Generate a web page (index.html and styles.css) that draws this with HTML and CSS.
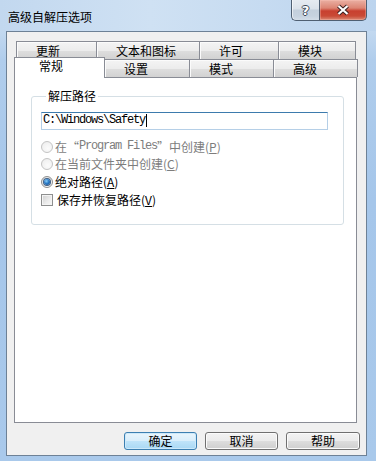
FILE: index.html
```html
<!DOCTYPE html>
<html lang="zh-CN">
<head>
<meta charset="utf-8">
<title>高级自解压选项</title>
<link rel="stylesheet" href="styles.css">
</head>
<body>
<div class="window">
  <div class="titlebar">
    <div class="title">高级自解压选项</div>
    <div class="caption">
      <div class="cbtn help"><span class="qmark">?</span></div>
      <div class="cbtn close">
        <svg width="16" height="12" viewBox="0 0 16 12">
          <path d="M3.5 2 L12.5 10 M12.5 2 L3.5 10" stroke="#3a2020" stroke-width="4.2" fill="none"/>
          <path d="M3.5 2 L12.5 10 M12.5 2 L3.5 10" stroke="#ffffff" stroke-width="2.2" fill="none"/>
        </svg>
      </div>
    </div>
  </div>
  <div class="client">
    <div class="tabs">
      <div class="tabrow back">
        <div class="tab t-upd">更新</div>
        <div class="tab t-txt">文本和图标</div>
        <div class="tab t-lic">许可</div>
        <div class="tab t-mod">模块</div>
      </div>
      <div class="tabrow front">
        <div class="tab sel t-gen">常规</div>
        <div class="tab t-set">设置</div>
        <div class="tab t-mode">模式</div>
        <div class="tab t-adv">高级</div>
      </div>
    </div>
    <div class="panel">
      <fieldset class="group">
        <legend>解压路径</legend>
        <div class="textbox"><span class="mono">C:\Windows\Safety</span><span class="caret"></span></div>
        <div class="opt disabled first"><span class="radio"></span><span>在</span><span class="q ql">“</span><span class="mono">Program Files</span><span class="q qr">”</span><span>中创建(<u>P</u>)</span></div>
        <div class="opt disabled"><span class="radio"></span><span>在当前文件夹中创建(<u>C</u>)</span></div>
        <div class="opt third"><span class="radio on"></span><span>绝对路径(<u>A</u>)</span></div>
        <div class="opt fourth"><span class="check"></span><span>保存并恢复路径(<u>V</u>)</span></div>
      </fieldset>
    </div>
    <div class="buttons">
      <div class="btn default">确定</div>
      <div class="btn">取消</div>
      <div class="btn wide">帮助</div>
    </div>
  </div>
</div>
</body>
</html>
```
FILE: styles.css
```css
* { box-sizing: border-box; }
html, body { margin: 0; padding: 0; }
body {
  width: 376px;
  height: 461px;
  overflow: hidden;
  font-family: "Noto Sans CJK SC", "Noto Sans", sans-serif;
  font-size: 12px;
  color: #000;
  background: #a9c9ea;
}
.window {
  width: 376px;
  height: 461px;
  display: flex;
  flex-direction: column;
  background: linear-gradient(180deg, #c8dcf1 0px, #c3d9f0 30px, #b0cdec 60px, #a5c6ea 200px, #a9c9eb 100%);
}
.titlebar {
  height: 31px;
  display: flex;
  align-items: flex-start;
  background: linear-gradient(90deg, #c2d8ef 0%, #cfe1f3 40%, #c6dbf1 70%, #bcd4ee 100%);
}
.title {
  padding-left: 8px;
  padding-top: 9px;
  line-height: 16px;
  font-size: 12px;
  color: #000;
}
.caption {
  margin-left: auto;
  margin-right: 9px;
  display: flex;
  height: 21px;
}
.cbtn {
  height: 21px;
  display: flex;
  align-items: center;
  justify-content: center;
  border: 1px solid #4f5f72;
  border-top: none;
}
.help {
  width: 28px;
  border-right: none;
  border-bottom-left-radius: 5px;
  background: linear-gradient(180deg, #e6ebf1 0%, #dbe2ea 45%, #c3cfdc 50%, #c6d2df 80%, #d3dde8 100%);
  box-shadow: inset 1px 0 0 rgba(255,255,255,0.6);
}
.qmark {
  font-family: "DejaVu Sans", sans-serif;
  font-weight: bold;
  font-size: 13px;
  line-height: 13px;
  color: #fff;
  text-shadow: 1px 0 0 #3c4656, -1px 0 0 #3c4656, 0 1px 0 #3c4656, 0 -1px 0 #3c4656;
}
.close {
  width: 48px;
  border-bottom-right-radius: 5px;
  background: linear-gradient(180deg, #eab0a3 0%, #dc8574 40%, #c8402f 55%, #c94a36 80%, #da8a75 100%);
  box-shadow: inset 0 0 0 1px rgba(255,200,190,0.35);
}
.client {
  margin-left: 6px;
  width: 361px;
  height: 425px;
  border: 1px solid #6d8196;
  background: #f0f0f0;
  display: flex;
  flex-direction: column;
  padding: 9px 6px 0 7px;
}
.tabs {
  height: 36px;
  display: flex;
  flex-direction: column;
}
.tabrow {
  height: 18px;
  display: flex;
  align-items: flex-end;
}
.tabrow.back { margin-left: 2px; }
.tab {
  height: 18px;
  border: 1px solid #898c95;
  border-bottom: none;
  padding-left: 19px;
  padding-top: 3px;
  line-height: 12px;
  white-space: nowrap;
  background: linear-gradient(180deg, #f4f4f4 0%, #ececec 50%, #dedede 52%, #d2d2d2 100%);
  box-shadow: inset 1px 1px 0 #fbfbfb;
  margin-left: -1px;
}
.tab:first-child { margin-left: 0; }
.t-upd { width: 81px; }
.t-txt { width: 104px; }
.t-lic { width: 80px; }
.t-mod { width: 78px; }
.t-gen { width: 91px; }
.t-set { width: 86px; }
.t-mode { width: 85px; }
.t-adv { width: 85px; }
.tab.sel {
  height: 21px;
  margin-bottom: -1px;
  position: relative;
  z-index: 1;
  background: #fff;
  box-shadow: none;
  padding-left: 24px;
  padding-top: 2px;
}
.panel {
  width: 343px;
  height: 346px;
  border: 1px solid #898c95;
  background: #fff;
  padding: 0;
}
.group {
  margin: 11px 0 0 16px;
  width: 313px;
  border: 1px solid #d5dfe5;
  border-radius: 3px;
  padding: 9px 0 16px 9px;
  min-inline-size: 0;
}
.group legend {
  margin-left: 5px;
  padding: 0 2px;
  line-height: 14px;
  font-size: 12px;
}
.textbox {
  width: 287px;
  height: 18px;
  border: 1px solid #b5cfe7;
  border-top-color: #3d7bad;
  padding-left: 1px;
  display: flex;
  align-items: center;
}
.mono {
  font-family: "Liberation Mono", monospace;
  font-size: 12px;
  letter-spacing: -1.2px;
}
.textbox .mono { line-height: 14px; margin-top: -2px; }
.caret {
  width: 1px;
  height: 13px;
  background: #000;
  margin-left: 1px;
  margin-top: -1px;
}
.opt {
  height: 17px;
  display: flex;
  align-items: center;
  line-height: 17px;
  white-space: nowrap;
}
.opt.first { margin-top: 8px; }
.opt.third { margin-top: 1px; }
.opt.fourth { margin-top: 1px; }
.opt.disabled { color: #7d7d7d; }
.q { display: inline-block; width: 12px; }
.ql { text-align: right; padding-right: 1px; }
.qr { text-align: left; }
.radio {
  width: 12px;
  height: 12px;
  border-radius: 50%;
  border: 1px solid #8e8f8f;
  background: radial-gradient(circle at 60% 65%, #ffffff 0%, #f1f1f1 50%, #d6d6d6 100%);
  margin-right: 2px;
  flex: none;
  display: flex;
  align-items: center;
  justify-content: center;
}
.disabled .radio {
  border-color: #c4c4c4;
  background: radial-gradient(circle at 60% 65%, #fbfbfb 0%, #f2f2f2 60%, #e6e6e6 100%);
}
.radio.on::after {
  content: "";
  width: 6px;
  height: 6px;
  border-radius: 50%;
  background: radial-gradient(circle at 40% 35%, #8cd0f8 0%, #2a7bc8 45%, #0d3f7c 100%);
  box-shadow: 0 0 0 1px #3f5f85;
}
.check {
  width: 12px;
  height: 12px;
  border: 1px solid #8e8f8f;
  background: linear-gradient(135deg, #cfcfcf 0%, #ececec 60%, #f8f8f8 100%);
  box-shadow: inset 0 0 0 1px #f4f4f4;
  margin-right: 4px;
  flex: none;
}
.buttons {
  margin-top: 9px;
  display: flex;
  justify-content: flex-end;
  gap: 8px;
}
.btn {
  width: 73px;
  height: 18px;
  border: 1px solid #707070;
  border-radius: 3px;
  background: linear-gradient(180deg, #f3f3f3 0%, #ebebeb 50%, #dddddd 52%, #cfcfcf 100%);
  box-shadow: inset 0 0 0 1px #fbfbfb;
  text-align: center;
  line-height: 16px;
}
.btn.wide { width: 74px; }
.btn.default {
  border-color: #3c7fb1;
  background: linear-gradient(180deg, #e9f5fc 0%, #d9eefb 50%, #bfe3f9 52%, #a9d8f4 100%);
  box-shadow: inset 0 0 0 1px #cde9fa;
}
```
